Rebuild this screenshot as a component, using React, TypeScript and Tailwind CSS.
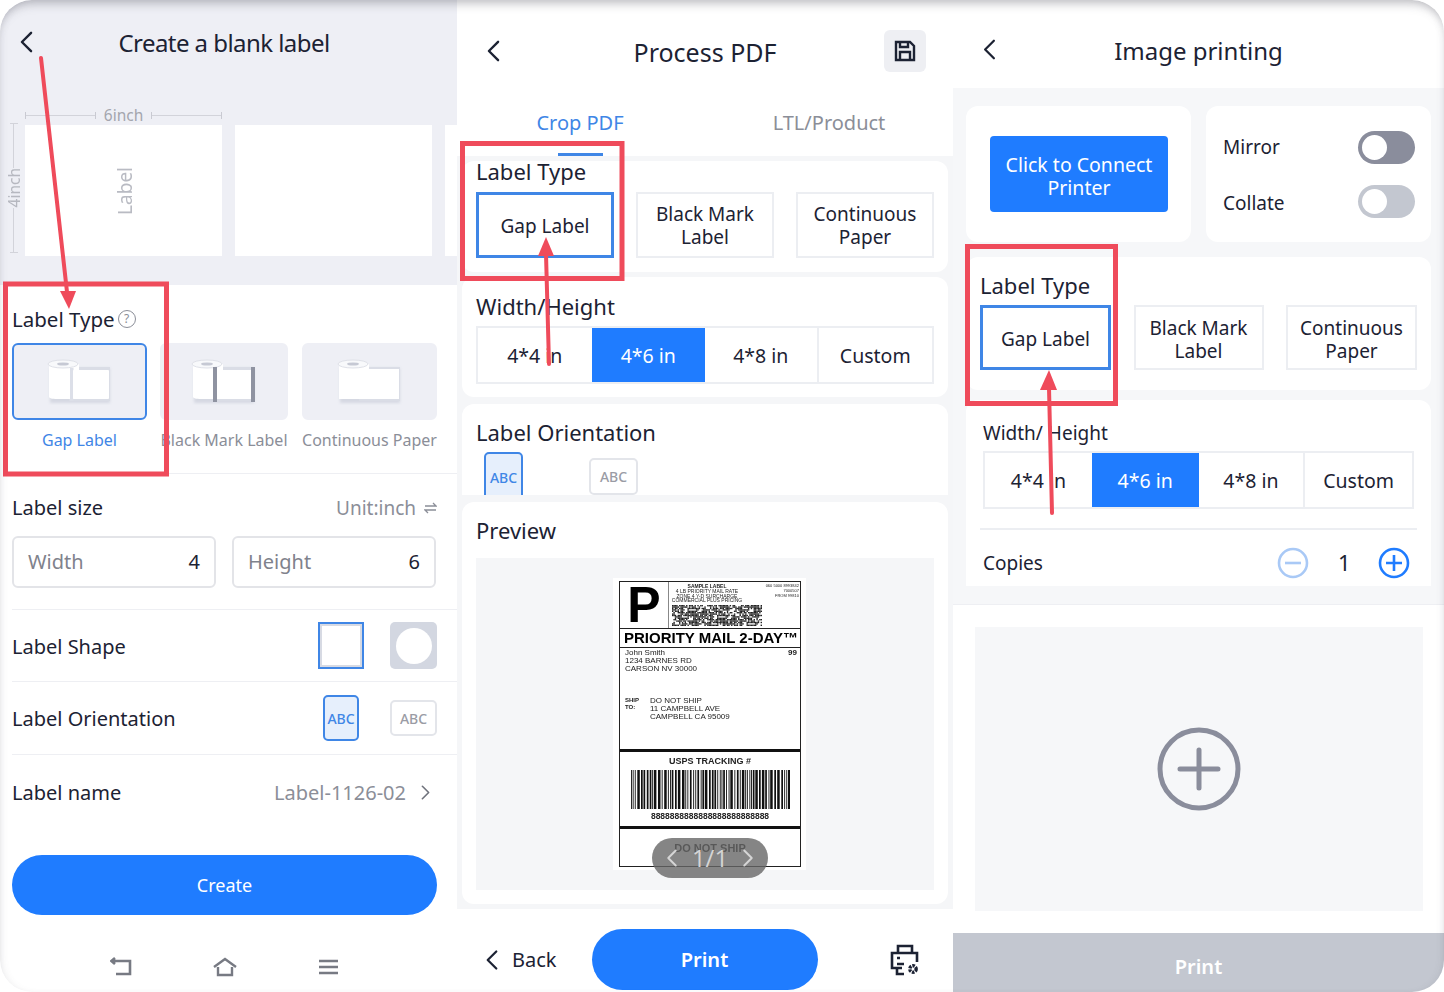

const BLUE = '#1f7cff';

function Chevron({ className = '', dir = 'left' }: { className?: string; dir?: 'left' | 'right' }) {
  return (
    <svg viewBox="0 0 14 24" className={className} fill="none" stroke="currentColor" strokeWidth="2.6" strokeLinecap="round" strokeLinejoin="round">
      <path d={dir === 'left' ? 'M12 2 2 12l10 10' : 'M2 2l10 10L2 22'} />
    </svg>
  );
}

function Roll({ kind }: { kind: 'gap' | 'mark' | 'cont' }) {
  return (
    <svg width="66" height="46" viewBox="0 0 66 46">
      <defs>
        <filter id="rs" x="-20%" y="-20%" width="140%" height="140%">
          <feGaussianBlur stdDeviation="1.4" />
        </filter>
      </defs>
      <rect x="3" y="9" width="60" height="35" fill="#d5d8e2" filter="url(#rs)" />
      <rect x="22" y="8" width="41" height="34" fill="#dadde6" />
      <path d="M2 5h30v35H10c-5 0-8-1-8-2z" fill="#fff" />
      <ellipse cx="16" cy="5" rx="15" ry="4" fill="#f8f9fb" stroke="#dfe1e8" />
      <ellipse cx="16" cy="5" rx="6" ry="1.6" fill="#c6c9d4" />
      {kind === 'cont' && <rect x="2" y="10" width="60" height="30" fill="#fff" />}
      {kind === 'gap' && (
        <>
          <rect x="23" y="9" width="3.500" height="33" fill="#dcdfe8" />
          <rect x="26" y="11" width="36" height="29" rx="1" fill="#fff" />
        </>
      )}
      {kind === 'mark' && (
        <>
          <rect x="26" y="11" width="35" height="29" fill="#fff" />
          <rect x="22" y="8" width="4" height="35" fill="#8f93a1" />
          <rect x="60" y="8" width="4" height="35" fill="#8f93a1" />
        </>
      )}
    </svg>
  );
}

function TypeCard({ kind, label, w, active }: { kind: 'gap' | 'mark' | 'cont'; label: string; w: string; active?: boolean }) {
  return (
    <div className={`flex flex-col items-center ${w}`}>
      <div className={`w-full h-[77px] rounded-md bg-[#eeeff5] flex items-center justify-center border-2 ${active ? 'border-[#3f86e6]' : 'border-[#eeeff5]'}`}>
        <Roll kind={kind} />
      </div>
      <span className={`mt-[10px] text-[16px] leading-[20px] whitespace-nowrap ${active ? 'text-[#3f86e6]' : 'text-[#8b8e98]'}`}>{label}</span>
    </div>
  );
}

function AbcBox({ active, className }: { active?: boolean; className: string }) {
  return (
    <div className={`flex items-center justify-center text-[14px] font-medium rounded-[5px] border-2 ${active ? 'bg-[#e6effc] border-[#3f86e6] text-[#3f86e6]' : 'bg-white border-[#e3e5ea] text-[#9a9ca5]'} ${className}`}>
      ABC
    </div>
  );
}

function FirstPanel() {
  return (
    <section className="w-[457px] h-full shrink-0 flex flex-col bg-white">
      <div className="h-[285px] bg-[#eeeff5] flex flex-col">
        <div className="h-[101px] relative flex justify-center pt-[25px] pr-[9px]">
          <Chevron className="absolute left-[20px] top-[31px] w-[13px] h-[22px] text-[#1c2233]" />
          <h1 className="text-[24px] leading-[36px] text-[#1c2233] tracking-[-0.55px]">Create a blank label</h1>
        </div>
        <div className="flex">
          <div className="ml-[2px] w-[23px] h-[152px] shrink-0 flex flex-col items-center pt-[22px] text-[#b6b8c0]">
            <div className="w-[8px] h-px bg-[#d2d3da]" />
            <div className="flex-1 w-px bg-[#d2d3da]" />
            <span className="[writing-mode:vertical-rl] rotate-180 text-[15.500px] leading-[16px] py-1">4inch</span>
            <div className="flex-1 w-px bg-[#d2d3da]" />
            <div className="w-[8px] h-px bg-[#d2d3da]" />
          </div>
          <div className="flex-1 min-w-0 overflow-hidden">
            <div className="w-[197px] h-[25px] flex items-center gap-2 text-[#a4a6ae] text-[15.500px] leading-[18px] pt-[3px]">
              <div className="flex-1 h-[7px] border-x border-[#c9cad2] relative flex items-center"><div className="w-full h-px bg-[#d2d3da]" /></div>
              <span>6inch</span>
              <div className="flex-1 h-[7px] border-x border-[#c9cad2] relative flex items-center"><div className="w-full h-px bg-[#d2d3da]" /></div>
            </div>
            <div className="flex gap-[13px] mt-[-1px]">
              <div className="w-[197px] h-[131px] shrink-0 bg-white flex items-center justify-center pl-[3px]">
                <span className="[writing-mode:vertical-rl] rotate-180 text-[19px] text-[#b9bbc3]">Label</span>
              </div>
              <div className="w-[197px] h-[131px] shrink-0 bg-white" />
              <div className="w-[197px] h-[131px] shrink-0 bg-white" />
            </div>
          </div>
        </div>
      </div>

      <div className="h-[189px] ml-[12px] border-b border-[#eeeff3] pt-[22px]">
        <div className="flex items-center h-[24px] gap-[3px]">
          <span className="text-[20.500px] leading-[24px] text-[#1c2233]">Label Type</span>
          <span className="w-[18px] h-[18px] rounded-full border border-[#8b8e98] text-[#8b8e98] text-[12px] leading-[16px] text-center">?</span>
        </div>
        <div className="flex mt-[12px]">
          <TypeCard kind="gap" label="Gap Label" w="w-[135px]" active />
          <div className="ml-[13px]"><TypeCard kind="mark" label="Black Mark Label" w="w-[128px]" /></div>
          <div className="ml-[14px]"><TypeCard kind="cont" label="Continuous Paper" w="w-[135px]" /></div>
        </div>
      </div>

      <div className="h-[136px] ml-[12px] pr-[20px] border-b border-[#eeeff3] pt-[21px]">
        <div className="flex items-center justify-between h-[26px]">
          <span className="text-[20px] text-[#1c2233]">Label size</span>
          <span className="flex items-center gap-[8px] text-[19px] text-[#8b8e98]">
            Unit:inch
            <svg width="13" height="12" viewBox="0 0 13 12" fill="none" stroke="#8b8e98" strokeWidth="1.3"><path d="M1 4h11L9 1M12 8H1l3 3" /></svg>
          </span>
        </div>
        <div className="flex gap-[16px] mt-[15px]">
          {[['Width', '4'], ['Height', '6']].map(([k, v]) => (
            <div key={k} className="w-[204px] h-[52px] rounded-[6px] border-2 border-[#e3e4e8] flex items-center justify-between pl-[14px] pr-[14px] text-[20px]">
              <span className="text-[#7f828c]">{k}</span>
              <span className="text-[#1c2233]">{v}</span>
            </div>
          ))}
        </div>
      </div>

      <div className="h-[72px] ml-[12px] pr-[20px] border-b border-[#eeeff3] flex items-center justify-between">
        <span className="text-[20px] text-[#1c2233] translate-y-px">Label Shape</span>
        <div className="flex gap-[26px]">
          <div className="w-[46px] h-[47px] bg-white border-2 border-[#3f86e6] outline-2 -outline-offset-4 outline-[#d7dae3]" />
          <div className="w-[47px] h-[47px] bg-[#d3d7e1] rounded-[5px] flex items-center justify-center">
            <div className="w-[36px] h-[36px] rounded-full bg-white" />
          </div>
        </div>
      </div>

      <div className="h-[73px] ml-[12px] pr-[20px] border-b border-[#eeeff3] flex items-center justify-between">
        <span className="text-[20px] text-[#1c2233] translate-y-px">Label Orientation</span>
        <div className="flex items-center gap-[31px]">
          <AbcBox active className="w-[36px] h-[46px]" />
          <AbcBox className="w-[47px] h-[36px]" />
        </div>
      </div>

      <div className="h-[75px] ml-[12px] pr-[27px] flex items-center justify-between">
        <span className="text-[20px] text-[#1c2233]">Label name</span>
        <span className="flex items-center gap-[15px] text-[20px] text-[#8b8e98]">
          Label-1126-02
          <Chevron dir="right" className="w-[9px] h-[15px] text-[#6f727c]" />
        </span>
      </div>

      <div className="mt-[25px] ml-[12px] w-[425px] h-[60px] rounded-full bg-[#1f7cff] text-white text-[18px] flex items-center justify-center shrink-0">Create</div>

      <div className="mt-[42px] pr-[9px] flex items-center justify-center gap-[80px] text-[#777a83]">
        <svg width="22" height="20" viewBox="0 0 22 20" fill="none" stroke="currentColor" strokeWidth="2.6"><path d="M1 4h19v13H6M5 1 1.500 4 5 7" /></svg>
        <svg width="26" height="20" viewBox="0 0 26 20" fill="none" stroke="currentColor" strokeWidth="2.4"><path d="M2 10 13 2l11 8M6 10v8h14v-8" /></svg>
        <svg width="21" height="18" viewBox="0 0 21 18" fill="none" stroke="currentColor" strokeWidth="2.6"><path d="M1 3h19M1 9h19M1 15h19" /></svg>
      </div>
    </section>
  );
}

function Segments({ height }: { height: string }) {
  const items = ['4*4 in', '4*6 in', '4*8 in', 'Custom'];
  return (
    <div className={`grid grid-cols-4 border-2 border-[#eceef2] ${height}`}>
      {items.map((it, i) => (
        <div key={it} className={`flex items-center justify-center pt-[2px] text-[19.500px] ${i === 1 ? 'bg-[#1f7cff] text-white' : 'text-[#1c2233]'} ${i === 2 ? 'border-r-2 border-[#eceef2]' : ''}`}>
          {it}
        </div>
      ))}
    </div>
  );
}

function OptionBox({ text, className, active }: { text: string; className: string; active?: boolean }) {
  return (
    <div className={`flex items-center justify-center text-center whitespace-pre-line text-[19px] leading-[23px] text-[#1c2233] ${active ? 'border-[3px] border-[#3f86e6]' : 'border-2 border-[#eceef2]'} ${className}`}>
      {text}
    </div>
  );
}

// deterministic bar pattern so the barcode looks the same on every render
function Barcode({ width, height, seed }: { width: number; height: number; seed: number }) {
  const bars: { x: number; w: number }[] = [];
  let x = 0;
  let s = seed;
  while (x < width) {
    s = (s * 7919 + 13) % 1009;
    const w = 0.9 + (s % 3) * 0.8;
    bars.push({ x, w });
    x += w + 0.8 + ((s >> 2) % 3) * 0.4;
  }
  return (
    <svg width={width} height={height} className="block">
      {bars.map((b, i) => <rect key={i} x={b.x} y="0" width={b.w} height={height} fill="#111" />)}
    </svg>
  );
}

function Matrix() {
  const cells: { x: number; y: number }[] = [];
  let s = 37;
  for (let y = 0; y < 15; y++) {
    for (let x = 0; x < 64; x++) {
      s = (s * 7919 + 17) % 4093;
      if (s % 3 !== 0) cells.push({ x, y });
    }
  }
  return (
    <svg width="90" height="21" viewBox="0 0 64 15" preserveAspectRatio="none" className="block">
      {cells.map((c, i) => <rect key={i} x={c.x} y={c.y} width="1" height="1" fill="#222" />)}
    </svg>
  );
}

function ShippingLabel() {
  return (
    <div className="relative w-[193px] h-[292px] bg-white pt-[3px] pl-[6px]">
      <div className="w-[182px] h-[286px] border border-[#222] flex flex-col font-['Liberation_Sans',sans-serif] text-[#222] blur-[0.25px]">
        <div className="h-[47px] flex border-b border-[#222]">
          <div className="w-[49px] border-r border-[#888] flex items-center justify-center text-[50px] leading-none font-bold text-black">P</div>
          <div className="flex-1 relative pl-[2px]">
            <div className="flex justify-between">
              <div className="text-[5px] leading-[4.800px] text-center pt-[2px] w-[72px] whitespace-nowrap">
                <b>SAMPLE LABEL</b><br />4 LB PRIORITY MAIL RATE<br />ZONE 4 Y-D SURCHARGE<br />COMMERCIAL PLUS PRICING
              </div>
              <div className="text-[4px] leading-[4.800px] text-right pt-[2px] pr-[1px] whitespace-nowrap">060 5000 8993842<br />7000507<br />FROM 99810</div>
            </div>
            <div className="mt-[2px] ml-[1px]"><Matrix /></div>
          </div>
        </div>
        <div className="h-[19px] border-b border-[#222] text-[15px] leading-[18px] font-bold text-black pl-[4px] whitespace-nowrap">PRIORITY MAIL 2-DAY™</div>
        <div className="h-[104px] border-b-[3px] border-[#111] flex flex-col pt-[1px] pl-[5px] pr-[3px] text-[8px] leading-[8px]">
          <div className="flex justify-between">
            <div>John Smith<br />1234 BARNES RD<br />CARSON NV 30000</div>
            <b className="text-[8px]">99</b>
          </div>
          <div className="flex mt-[24px]">
            <b className="w-[25px] text-[6px] leading-[7px]">SHIP<br />TO:</b>
            <div>DO NOT SHIP<br />11 CAMPBELL AVE<br />CAMPBELL CA 95009</div>
          </div>
        </div>
        <div className="h-[77px] border-b-[3px] border-[#111] flex flex-col items-center pt-[5px]">
          <b className="text-[9px] leading-[9px]">USPS TRACKING #</b>
          <div className="mt-[4px]"><Barcode width={159} height={39} seed={11} /></div>
          <b className="text-[8.500px] leading-[9px] mt-[3px]">8888888888888888888888888</b>
        </div>
        <div className="flex-1 pt-[14px] text-center text-[11px] leading-[11px] font-bold">DO NOT SHIP</div>
      </div>
      <div className="absolute left-[39px] top-[260px] w-[116px] h-[40px] rounded-full bg-[#666]/80 flex items-center justify-center gap-[14px] text-[#d5d5d5] text-[24px] font-['Open_Sans',sans-serif]">
        <Chevron className="w-[12px] h-[18px]" />
        <span className="leading-none">1/1</span>
        <Chevron dir="right" className="w-[12px] h-[18px]" />
      </div>
    </div>
  );
}

function SecondPanel() {
  return (
    <section className="w-[496px] h-full shrink-0 flex flex-col bg-[#f5f6f8]">
      <div className="h-[156px] bg-white shrink-0 flex flex-col">
        <div className="h-[104px] relative flex justify-center pt-[33px]">
          <Chevron className="absolute left-[30px] top-[40px] w-[13px] h-[22px] text-[#1c2233]" />
          <h1 className="text-[25px] leading-[38px] text-[#1c2233]">Process PDF</h1>
          <div className="absolute left-[427px] top-[30px] w-[42px] h-[42px] rounded-[6px] bg-[#eeeff3] flex items-center justify-center">
            <svg width="22" height="22" viewBox="0 0 22 22" fill="none" stroke="#1c2233" strokeWidth="2.4"><path d="M2 2h14l4 4v14H2zM6 2v5h8V2M6 20v-8h10v8" /></svg>
          </div>
        </div>
        <div className="flex h-[52px] text-[20px]">
          <div className="w-[246px] flex flex-col items-center relative">
            <span className="text-[#3f86e6] leading-[38px]">Crop PDF</span>
            <div className="absolute bottom-0 left-[101px] w-[45px] h-[3px] bg-[#3f86e6]" />
          </div>
          <div className="flex-1 text-center text-[#8b8e98] leading-[38px] pl-[2px]">LTL/Product</div>
        </div>
      </div>

      <div className="mt-[5px] mx-[5px] h-[111px] shrink-0 bg-white rounded-xl px-[14px]">
        <div className="h-[31px] text-[22px] leading-[21px] text-[#1c2233]">Label Type</div>
        <div className="flex justify-between">
          <OptionBox active text="Gap Label" className="w-[138px] h-[66px] pt-[2px]" />
          <OptionBox text={'Black Mark\nLabel'} className="w-[138px] h-[66px] pt-[2px]" />
          <OptionBox text={'Continuous\nPaper'} className="w-[138px] h-[66px] pt-[2px]" />
        </div>
      </div>

      <div className="mt-[5px] mx-[5px] h-[120px] shrink-0 bg-white rounded-xl px-[14px] pt-[14px]">
        <div className="h-[35px] text-[22px] leading-[30px] text-[#1c2233]">Width/Height</div>
        <Segments height="h-[58px]" />
      </div>

      <div className="mt-[7px] mx-[5px] h-[91px] shrink-0 bg-white rounded-t-xl px-[14px] pt-[13px] overflow-hidden">
        <div className="h-[35px] text-[22px] leading-[30px] text-[#1c2233]">Label Orientation</div>
        <div className="flex items-start">
          <div className="ml-[8px] w-[39px] h-[50px] rounded-[5px] border-2 border-[#3f86e6] bg-[#e6effc] text-[#3f86e6] text-[14px] font-medium flex items-center justify-center">ABC</div>
          <div className="ml-[66px] mt-[6px] w-[49px] h-[37px] rounded-[5px] border-2 border-[#e3e5ea] text-[#9a9ca5] text-[14px] font-medium flex items-center justify-center">ABC</div>
        </div>
      </div>

      <div className="mt-[7px] mx-[5px] h-[402px] shrink-0 bg-white rounded-xl px-[14px] pt-[13px]">
        <div className="h-[43px] text-[22px] leading-[30px] text-[#1c2233]">Preview</div>
        <div className="h-[332px] bg-[#f5f6f8] flex justify-center pt-[20px] pl-[9px]">
          <ShippingLabel />
        </div>
      </div>

      <div className="mt-[5px] flex-1 bg-white flex items-center pt-[18px]">
        <Chevron className="ml-[29px] w-[12px] h-[22px] text-[#1c2233]" />
        <span className="ml-[14px] text-[20px] text-[#1c2233]">Back</span>
        <div className="ml-[35px] w-[226px] h-[61px] rounded-full bg-[#1f7cff] text-white text-[20px] font-semibold flex items-center justify-center">Print</div>
        <svg className="ml-[72px]" width="30" height="32" viewBox="0 0 30 32" fill="none" stroke="#1c2233" strokeWidth="2.600">
          <path d="M8 9V2h14v7M12 24H2V9h25v9M7 14h3" />
          <path d="M7 24v6h7M14 20H7" />
          <circle cx="23" cy="25" r="3.200" strokeWidth="3.400" strokeDasharray="2.500 1" />
        </svg>
      </div>
    </section>
  );
}

function Toggle({ dark }: { dark?: boolean }) {
  return (
    <div className={`w-[57px] h-[33px] rounded-full pl-[4px] flex items-center ${dark ? 'bg-[#8a8d9c]' : 'bg-[#c3c7d0]'}`}>
      <div className="w-[25px] h-[25px] rounded-full bg-white" />
    </div>
  );
}

function ThirdPanel() {
  return (
    <section className="w-[491px] h-full shrink-0 flex flex-col bg-[#f6f7f9]">
      <div className="h-[88px] bg-white shrink-0 relative flex justify-center pt-[32px]">
        <Chevron className="absolute left-[30px] top-[39px] w-[13px] h-[21px] text-[#1c2233]" />
        <h1 className="text-[24px] leading-[38px] text-[#1c2233]">Image printing</h1>
      </div>

      <div className="mt-[18px] mx-[13px] flex gap-[15px] shrink-0">
        <div className="w-[225px] h-[136px] rounded-xl bg-white pl-[24px] pt-[30px]">
          <div className="w-[178px] h-[76px] rounded-[4px] bg-[#1f7cff] text-white text-[19.500px] leading-[23px] text-center flex items-center justify-center px-[8px] pt-[3px]">Click to Connect Printer</div>
        </div>
        <div className="flex-1 h-[136px] rounded-xl bg-white px-[16px] pt-[25px] pl-[17px]">
          <div className="flex items-center justify-between h-[33px] text-[19px] text-[#1c2233]">Mirror<Toggle dark /></div>
          <div className="flex items-center justify-between h-[33px] mt-[21px] text-[19px] text-[#1c2233]"><span className="translate-y-[2px]">Collate</span><Toggle /></div>
        </div>
      </div>

      <div className="mt-[15px] mx-[13px] h-[133px] shrink-0 rounded-xl bg-white px-[14px] pt-[15px]">
        <div className="h-[33px] text-[22px] leading-[26px] text-[#1c2233]">Label Type</div>
        <div className="flex justify-between">
          <OptionBox active text="Gap Label" className="w-[131px] h-[65px] pt-[4px]" />
          <OptionBox text={'Black Mark\nLabel'} className="w-[130px] h-[65px] pt-[4px]" />
          <OptionBox text={'Continuous\nPaper'} className="w-[131px] h-[65px] pt-[4px]" />
        </div>
      </div>

      <div className="mt-[10px] mx-[13px] h-[186px] shrink-0 rounded-t-xl bg-white px-[14px] pt-[19px]">
        <div className="h-[32px] pl-[3px] text-[19px] leading-[28px] text-[#1c2233]">Width/ Height</div>
        <div className="px-[3px]"><Segments height="h-[58px]" /></div>
        <div className="mt-[19px] h-[58px] border-t-2 border-[#eceef2] flex items-center pt-[9px] pl-[3px] pr-[7px] text-[19px] text-[#1c2233]">
          <span className="translate-y-px">Copies</span>
          <svg className="ml-auto" width="32" height="32" viewBox="0 0 32 32" fill="none" stroke="#a9c9f6" strokeWidth="2.600"><circle cx="16" cy="16" r="14" /><path d="M8 16h16" /></svg>
          <span className="ml-[29px] mr-[30px] w-[10px] text-center text-[22px]">1</span>
          <svg width="32" height="32" viewBox="0 0 32 32" fill="none" stroke={BLUE} strokeWidth="2.600"><circle cx="16" cy="16" r="14" /><path d="M8 16h16M16 8v16" /></svg>
        </div>
      </div>

      <div className="mt-[18px] flex-1 bg-white border-t border-[#eeeff3] flex flex-col min-h-0">
        <div className="mt-[22px] ml-[22px] mr-[21px] h-[284px] bg-[#f6f7f9] flex items-center justify-center">
          <svg width="84" height="84" viewBox="0 0 84 84" fill="none" stroke="#8a8d9c" strokeWidth="5">
            <circle cx="42" cy="42" r="39" /><path d="M23 42h38M42 23v38" strokeLinecap="round" />
          </svg>
        </div>
        <div className="mt-auto h-[59px] bg-[#c3c7d0] text-white text-[20px] font-semibold flex items-center justify-center pt-[8px]">Print</div>
      </div>
    </section>
  );
}

// red callouts drawn on top of the screenshots
function Annotations() {
  const red = '#ef4b5b';
  return (
    <svg className="absolute inset-0 pointer-events-none" width="1444" height="992" fill="none">
      <rect x="5.500" y="284" width="161" height="190" stroke={red} strokeWidth="5" />
      <path d="M41 58 67 292" stroke={red} strokeWidth="4" strokeLinecap="round" />
      <path d="M69 309 60 291h16z" fill={red} />
      <rect x="462.500" y="143.500" width="159.500" height="135" stroke={red} strokeWidth="5" />
      <path d="M549 364 546 254" stroke={red} strokeWidth="4" strokeLinecap="round" />
      <path d="M546 237 538 256h16z" fill={red} />
      <rect x="967.500" y="246.500" width="148" height="157" stroke={red} strokeWidth="5" />
      <path d="M1052 513 1049 388" stroke={red} strokeWidth="4" strokeLinecap="round" />
      <path d="M1049 370 1040 390h17z" fill={red} />
    </svg>
  );
}

export default function App() {
  return (
    <div className="w-[1444px] h-[992px] bg-white overflow-hidden">
      <div className="relative w-full h-full rounded-[32px] overflow-hidden flex font-['Noto_Sans',sans-serif]">
        <FirstPanel />
        <SecondPanel />
        <ThirdPanel />
        <Annotations />
        <div className="absolute inset-0 rounded-[32px] pointer-events-none shadow-[inset_0_10px_10px_-6px_rgba(90,90,100,0.35),inset_5px_0_8px_-5px_rgba(90,90,100,0.15),inset_-5px_0_8px_-5px_rgba(90,90,100,0.15)]" />
      </div>
    </div>
  );
}
